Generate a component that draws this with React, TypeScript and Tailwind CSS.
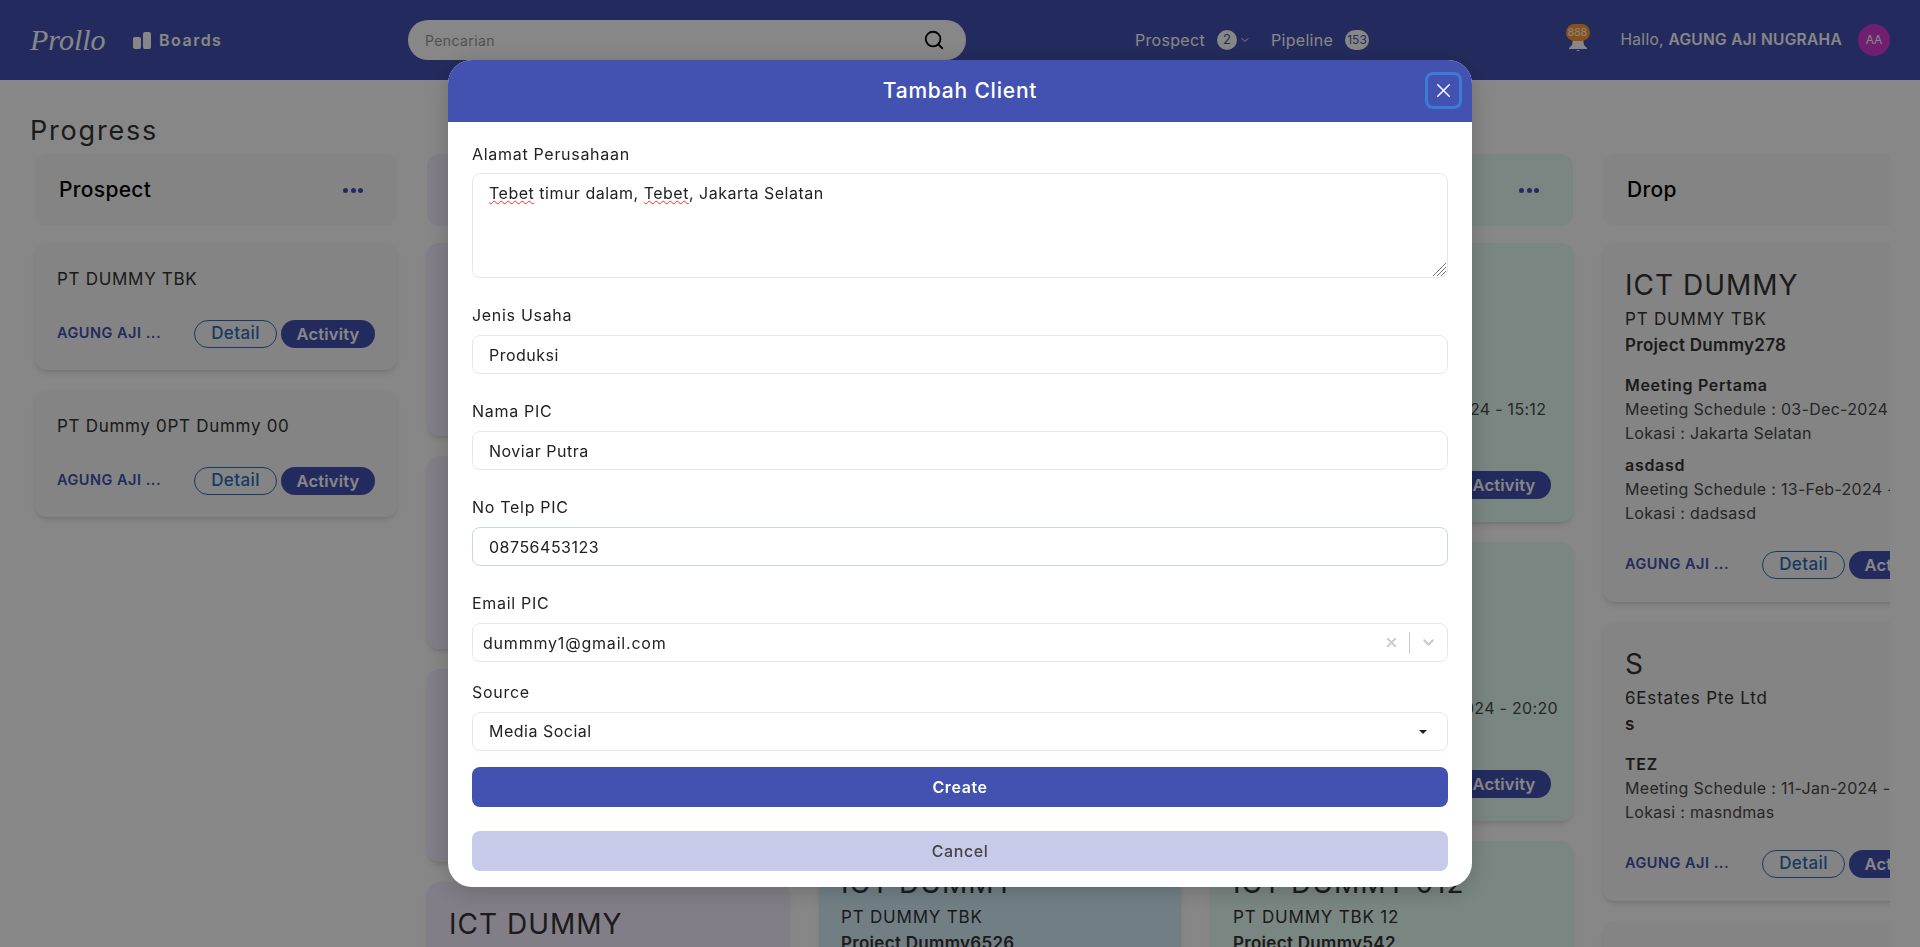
import React from 'react';
import { ChevronDown, Search, X } from 'lucide-react';

type Meeting = { name: string; schedule: string; place: string };
type Card = { title: string; company: string; project: string; meetings: Meeting[] };

function Dots() {
  return (
    <div className="flex gap-[2.5px]">
      <span className="w-[5px] h-[5px] rounded-full bg-[#4352b1]" />
      <span className="w-[5px] h-[5px] rounded-full bg-[#4352b1]" />
      <span className="w-[5px] h-[5px] rounded-full bg-[#4352b1]" />
    </div>
  );
}

function CardFooter() {
  return (
    <div className="flex items-center h-[28px]">
      <span className="w-[137px] -mt-[2px] text-[14.5px] tracking-[0.5px] font-semibold text-[#4352b1] truncate">AGUNG AJI ...</span>
      <button className="w-[83px] h-[28px] rounded-full border border-[#2a6fc0] text-[#2a6fc0] text-[17px] tracking-[0.4px] font-medium">Detail</button>
      <button className="ml-[4px] w-[94px] h-[28px] shrink-0 rounded-full bg-[#4352b1] text-white text-[16.5px] tracking-[0.2px] font-semibold">Activity</button>
    </div>
  );
}

function ProjectCard({ card, tint }: { card: Card; tint: string }) {
  const empty = card.meetings.length === 0;
  return (
    <div className={`rounded-xl shadow-md pl-[22px] pr-[22px] pt-[24px] ${empty ? 'pb-[22px]' : 'pb-[23px]'} ${tint}`}>
      <div className="text-[28px] leading-[36px] tracking-[1px] whitespace-nowrap">{card.title}</div>
      <div className="text-[17px] leading-[24px] tracking-[0.8px] mt-[4px] whitespace-nowrap">{card.company}</div>
      <div className="text-[17px] leading-[22px] tracking-[0.3px] mt-[3px] font-semibold whitespace-nowrap">{card.project}</div>
      <div className={empty ? 'mt-0' : 'mt-[17px] flex flex-col gap-[8px]'}>
        {card.meetings.map((m, i) => (
          <div key={i} className="text-[16px] leading-[24px] tracking-[0.3px] whitespace-nowrap text-[#4a4a4a]">
            <div className="font-semibold tracking-[0.7px] text-[#333]">{m.name}</div>
            <div>Meeting Schedule : {m.schedule}</div>
            <div>Lokasi : {m.place}</div>
          </div>
        ))}
      </div>
      <div className={empty ? 'mt-[30px]' : 'mt-[26px]'}>
        <CardFooter />
      </div>
    </div>
  );
}

function ClientCard({ name, tint }: { name: string; tint: string }) {
  return (
    <div className={`rounded-xl shadow-md h-[127px] pl-[22px] pr-[22px] pt-[24px] ${tint}`}>
      <div className="text-[17px] leading-[24px] tracking-[0.7px] whitespace-nowrap">{name}</div>
      <div className="mt-[29px]">
        <CardFooter />
      </div>
    </div>
  );
}

function Column({ name, tint, dots, children }: { name: string; tint: string; dots?: boolean; children: React.ReactNode }) {
  return (
    <div className="w-[362px] shrink-0 flex flex-col gap-[17px]">
      <div className={`h-[72px] shrink-0 rounded-xl flex items-center justify-between pl-[24px] pr-[34px] ${tint}`}>
        <span className="text-[21px] tracking-[0.3px] font-medium text-black">{name}</span>
        {dots && <Dots />}
      </div>
      <div className="flex flex-col gap-[20px]">{children}</div>
    </div>
  );
}

function Field({ label, value, border }: { label: string; value: string; border?: string }) {
  return (
    <div className="mb-[25px]">
      <label className="block text-[16px] leading-[24px] tracking-[0.7px] mb-[8px] text-[#222]">{label}</label>
      <input
        readOnly
        value={value}
        className={`w-full h-[39px] px-[16px] rounded-lg border text-[16px] tracking-[0.5px] text-[#222] outline-none ${border ?? 'border-[#e4e7ee]'}`}
      />
    </div>
  );
}

const m = (name: string, schedule: string, place: string): Meeting => ({ name, schedule, place });

const purple: Card[] = [
  { title: 'ICT DUMMY', company: 'PT DUMMY TBK', project: 'Project Dummy11', meetings: [] },
  { title: 'ICT DUMMY', company: 'PT DUMMY TBK', project: 'Project Dummy12', meetings: [] },
  { title: 'ICT DUMMY', company: 'PT DUMMY TBK', project: 'Project Dummy13', meetings: [] },
  { title: 'ICT DUMMY', company: 'PT DUMMY TBK', project: 'Project Dummy14', meetings: [] },
];
const blue: Card[] = [
  { title: 'ICT DUMMY', company: 'PT DUMMY TBK', project: 'Project Dummy21', meetings: [m('Meeting', '03-Dec-2024 - 10:00', 'Jakarta')] },
  { title: 'ICT DUMMY', company: 'PT DUMMY TBK', project: 'Project Dummy22', meetings: [m('Meeting', '03-Dec-2024 - 10:00', 'Jakarta')] },
  { title: 'ICT DUMMY', company: 'PT DUMMY TBK', project: 'Project Dummy6526', meetings: [] },
];
const green: Card[] = [
  { title: 'ICT DUMMY', company: 'PT DUMMY TBK', project: 'Project Dummy31', meetings: [m('Meeting', '12-Feb-2024 - 15:12', 'Jakarta')] },
  { title: 'ICT DUMMY', company: 'PT Dummy Indonesia.', project: 'Project Dummy32', meetings: [m('Meeting', '20-Mar-2024 - 20:20', 'Jakarta')] },
  { title: 'ICT DUMMY 012', company: 'PT DUMMY TBK 12', project: 'Project Dummy542', meetings: [] },
];
const drop: Card[] = [
  {
    title: 'ICT DUMMY',
    company: 'PT DUMMY TBK',
    project: 'Project Dummy278',
    meetings: [
      m('Meeting Pertama', '03-Dec-2024 - 10:00', 'Jakarta Selatan'),
      m('asdasd', '13-Feb-2024 - 15:30', 'dadsasd'),
    ],
  },
  { title: 'S', company: '6Estates Pte Ltd', project: 's', meetings: [m('TEZ', '11-Jan-2024 - 09:00', 'masndmas')] },
  { title: 'ICT DUMMY', company: 'PT DUMMY TBK', project: 'Project Dummy', meetings: [] },
];

export default function App() {
  return (
    <div className="h-screen overflow-hidden bg-white text-[#333] font-['Inter',sans-serif]">
      <header className="h-[80px] bg-[#4352b1] flex items-center px-[30px] text-white">
        <span className="w-[75px] text-[30px] leading-none italic font-['Liberation_Serif',serif]">Prollo</span>
        <div className="ml-[28px] flex items-end gap-[2px] h-[17px]">
          <span className="w-[8px] h-[12px] rounded-[2px] bg-white" />
          <span className="w-[8px] h-[17px] rounded-[2px] bg-white" />
        </div>
        <span className="ml-[8px] w-[64px] text-[16px] font-semibold tracking-[1.5px] whitespace-nowrap">Boards</span>
        <div className="ml-[185px] w-[558px] h-[40px] rounded-full bg-white flex items-center justify-between pl-[17px] pr-[21px]">
          <span className="text-[14px] tracking-[0.4px] text-[#999]">Pencarian</span>
          <Search className="w-[22px] h-[22px] text-black" strokeWidth={2} />
        </div>
        <span className="ml-[169px] w-[70px] text-[16px] tracking-[0.3px] whitespace-nowrap">Prospect</span>
        <span className="ml-[12px] w-[20px] h-[20px] rounded-full bg-white text-[#4352b1] text-[13px] flex items-center justify-center">2</span>
        <ChevronDown className="ml-[2px] w-[12px] h-[12px]" />
        <span className="ml-[20px] w-[62px] text-[16px] tracking-[0.3px] whitespace-nowrap">Pipeline</span>
        <span className="ml-[12px] w-[24px] h-[20px] rounded-full bg-white text-[#4352b1] text-[12px] flex items-center justify-center">153</span>
        <div className="relative ml-auto w-[24px] h-[26px] mr-[31px] mb-[6px]">
          <svg viewBox="0 0 24 12" className="absolute left-0 top-[15px] w-[24px] h-[12px]" fill="white">
            <path d="M7 0h10l1 6 3 3v1H3V9l3-3zM10 11h4l-2 1.5z" />
          </svg>
          <span className="absolute left-0 top-0 w-[24px] h-[17px] rounded-full bg-[#ff9a2e] text-white text-[10.5px] leading-[17px] text-center">888</span>
        </div>
        <span className="text-[15.5px] tracking-[0.3px] whitespace-nowrap">
          Hallo, <b className="font-semibold">AGUNG AJI NUGRAHA</b>
        </span>
        <span className="ml-[16px] w-[32px] h-[32px] rounded-full bg-[#d33bd3] text-[12px] flex items-center justify-center">AA</span>
      </header>

      <main className="px-[30px]">
        <h1 className="pt-[33px] h-[74px] text-[27px] leading-[36px] tracking-[1.8px]">Progress</h1>
        <div className="flex gap-[30px] overflow-hidden pl-[5px]">
          <Column name="Prospect" tint="bg-[#fafafa]" dots>
            <ClientCard name="PT DUMMY TBK" tint="bg-[#fafafa]" />
            <ClientCard name="PT Dummy 0PT Dummy 00" tint="bg-[#fafafa]" />
          </Column>
          <Column name="Meeting" tint="bg-[#f5eeff]" dots>
            {purple.map((c, i) => <ProjectCard key={i} card={c} tint="bg-[#f5eeff]" />)}
          </Column>
          <Column name="Proposal" tint="bg-[#d6f0fb]" dots>
            {blue.map((c, i) => <ProjectCard key={i} card={c} tint="bg-[#d6f0fb]" />)}
          </Column>
          <Column name="Deal" tint="bg-[#e6fdf4]" dots>
            {green.map((c, i) => <ProjectCard key={i} card={c} tint="bg-[#e6fdf4]" />)}
          </Column>
          <Column name="Drop" tint="bg-[#f9f9f9]">
            {drop.map((c, i) => <ProjectCard key={i} card={c} tint="bg-[#f9f9f9]" />)}
          </Column>
        </div>
      </main>

      <div className="fixed inset-0 bg-black/[0.47] flex justify-center pt-[60px]">
        <div className="w-[1024px] h-[827px] rounded-[24px] overflow-hidden bg-white shadow-[0_4px_24px_rgba(0,0,0,0.2)]">
          <div className="relative h-[62px] bg-[#4352b1] flex items-center justify-center text-white">
            <span className="text-[21px] font-medium tracking-[0.8px]">Tambah Client</span>
            <button className="absolute right-[10px] top-[12px] w-[37px] h-[37px] rounded-lg border-[3px] border-[#3a7bd5] flex items-center justify-center">
              <X className="w-[23px] h-[23px]" strokeWidth={1.5} />
            </button>
          </div>
          <div className="px-[24px] pt-[20px]">
            <div className="mb-[25px]">
              <label className="block text-[16px] leading-[24px] tracking-[0.7px] mb-[7px] text-[#222]">Alamat Perusahaan</label>
              <div className="relative w-full h-[105px] px-[16px] py-[7px] rounded-lg border border-[#e4e7ee] text-[16px] leading-[24px] tracking-[0.5px] text-[#222]">
                <span className="underline decoration-wavy decoration-red-500 decoration-1">Tebet</span> timur dalam,{' '}
                <span className="underline decoration-wavy decoration-red-500 decoration-1">Tebet</span>, Jakarta Selatan
                <svg viewBox="0 0 14 14" className="absolute right-[1px] bottom-[1px] w-[14px] h-[14px]" stroke="#777" strokeWidth="1">
                  <path d="M1 14L14 1M5 14L14 5M9 14L14 9" />
                </svg>
              </div>
            </div>
            <Field label="Jenis Usaha" value="Produksi" />
            <Field label="Nama PIC" value="Noviar Putra" />
            <Field label="No Telp PIC" value="08756453123" border="border-[#c9d5e6]" />

            <div className="mb-[18px]">
              <label className="block text-[16px] leading-[24px] tracking-[0.7px] mb-[8px] text-[#222]">Email PIC</label>
              <div className="h-[39px] rounded-lg border border-[#e4e7ee] flex items-center pl-[10px] text-[16px] tracking-[0.8px] text-[#222]">
                <span className="flex-1">dummmy1@gmail.com</span>
                <X className="w-[15px] h-[15px] text-[#ccc]" strokeWidth={3} />
                <span className="ml-[10px] w-px h-[22px] bg-[#ccc]" />
                <ChevronDown className="mx-[10px] w-[17px] h-[17px] text-[#ccc]" strokeWidth={3} />
              </div>
            </div>

            <div className="mb-[16px]">
              <label className="block text-[16px] leading-[24px] tracking-[0.7px] mb-[8px] text-[#222]">Source</label>
              <div className="h-[39px] rounded-lg border border-[#e4e7ee] flex items-center justify-between pl-[16px] pr-[20px] text-[16px] tracking-[0.5px] text-[#222]">
                <span className="-mt-[2px]">Media Social</span>
                <span className="w-0 h-0 border-x-[4px] border-x-transparent border-t-[4px] border-t-[#222]" />
              </div>
            </div>

            <button className="block w-full h-[40px] rounded-lg bg-[#4352b1] text-white text-[16px] tracking-[0.6px] font-semibold">Create</button>
            <button className="block w-full h-[40px] mt-[24px] rounded-lg bg-[#c7cae8] text-[#444] text-[16px] tracking-[0.6px] font-medium">Cancel</button>
          </div>
        </div>
      </div>
    </div>
  );
}
